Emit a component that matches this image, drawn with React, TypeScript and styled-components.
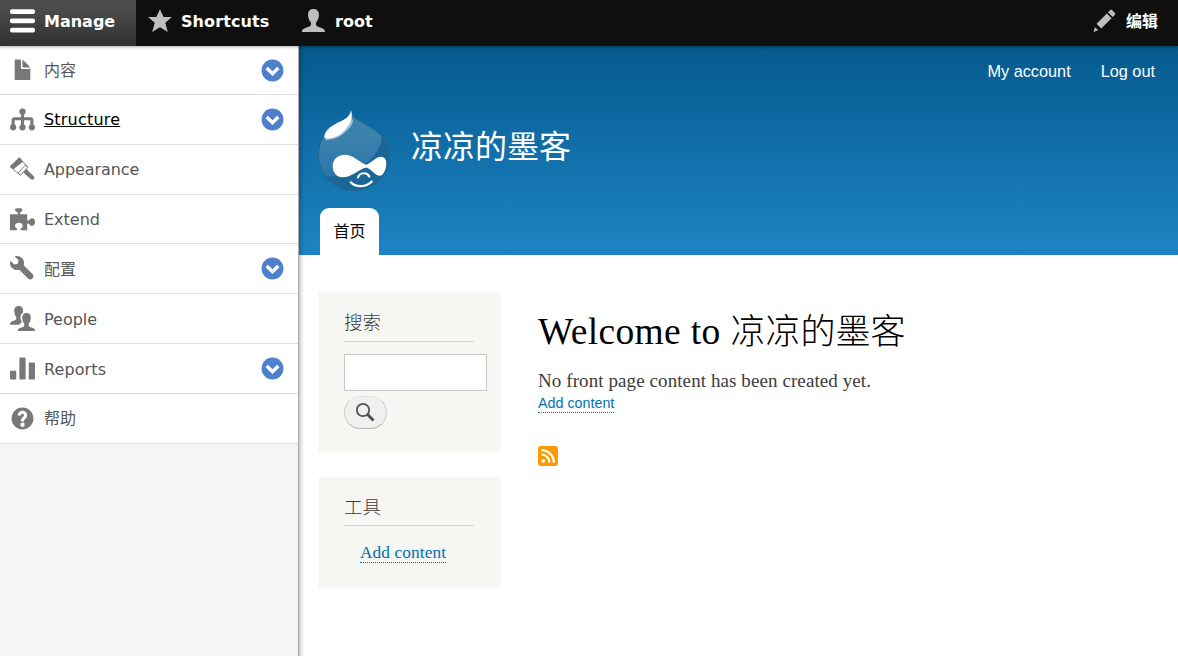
import React from "react";
import styled, { createGlobalStyle, css } from "styled-components";

const Global = createGlobalStyle`
  *, *::before, *::after { box-sizing: border-box; }
  html, body { margin: 0; height: 100%; background: #fff; overflow: hidden; }
  #root { height: 656px; }
  h1, h2, p, ul { margin: 0; padding: 0; font-weight: 400; }
  a { text-decoration: none; color: inherit; }
`;

const uiFont = `"DejaVu Sans", "Noto Sans CJK SC", sans-serif`;
const sansFont = `"Liberation Sans", "Noto Sans CJK SC", sans-serif`;
const serifFont = `"Liberation Serif", "Noto Sans CJK SC", serif`;

const Page = styled.div`
  display: flex;
  flex-direction: column;
  height: 656px;
`;

const Toolbar = styled.nav`
  display: flex;
  flex: none;
  position: relative;
  z-index: 3;
  height: 46px;
  background: #0f0f0f;
  color: #fff;
  font: 700 16px/43px ${uiFont};
  box-shadow: 0 0 3px 1px rgba(0, 0, 0, 0.33);
`;

const ToolbarTab = styled.a<{ $width?: number; $active?: boolean; $spacing?: number }>`
  display: flex;
  width: ${(p) => (p.$width ? `${p.$width}px` : "auto")};
  padding-left: ${(p) => (p.$spacing ? 11 : 10)}px;
  gap: 9px;
  letter-spacing: ${(p) => p.$spacing ?? 0}px;
  white-space: nowrap;
  ${(p) =>
    p.$active &&
    css`
      background: linear-gradient(rgba(255, 255, 255, 0.25) 20%, rgba(255, 255, 255, 0) 200%);
    `}
  svg { margin-top: 8px; }
  &:last-child { margin-left: auto; padding-right: 20px; }
`;

const Icon = styled.svg`
  flex: none;
  width: 25px;
  height: 25px;
  fill: currentColor;
`;

const TabIcon = styled(Icon)<{ $bright?: boolean }>`
  color: ${(p) => (p.$bright ? "#fff" : "#bebebe")};
`;

const Body = styled.div`
  display: flex;
  flex: 1;
  min-height: 0;
`;

const Tray = styled.aside`
  position: relative;
  z-index: 2;
  flex: none;
  width: 299px;
  background: #f5f5f5;
  border-right: 1px solid #aaa;
  box-shadow: -1px 0 5px 2px rgba(0, 0, 0, 0.33);
`;

const MenuRow = styled.a`
  display: flex;
  align-items: center;
  height: 49.83px;
  padding: 0 13px 0 10px;
  background: #fff;
  border-bottom: 1px solid #ddd;
  color: #787878;
  font: 400 16px/24px ${uiFont};
  &:first-child { height: 49px; }
`;

const MenuLabel = styled.span<{ $active?: boolean; $spacing?: number }>`
  flex: 1;
  padding-top: 2px;
  margin-left: 9px;
  color: ${(p) => (p.$active ? "#000" : "#565656")};
  text-decoration: ${(p) => (p.$active ? "underline" : "none")};
  letter-spacing: ${(p) => p.$spacing ?? 0}px;
`;

const Toggle = styled(Icon)`
  color: #4f80cc;
`;

const Site = styled.div`
  flex: 1;
  min-width: 0;
`;

const Banner = styled.header`
  display: flex;
  flex-direction: column;
  height: 209px;
  background: linear-gradient(#055a8e, #1d84c3);
  color: #fff;
  padding: 0 23px 0 19px;
`;

const UserLinks = styled.div`
  display: flex;
  justify-content: flex-end;
  gap: 30px;
  padding-top: 14px;
  height: 63px;
  font: 16.3px/23px ${sansFont};
`;

const Branding = styled.div`
  display: flex;
  gap: 20px;
  height: 99px;
`;

const Logo = styled.svg`
  width: 73px;
  height: 82px;
`;

const SiteName = styled.span`
  padding-top: 14px;
  font: 32px/48px ${sansFont};
`;

const HomeTab = styled.a`
  align-self: flex-start;
  width: 59px;
  height: 47px;
  margin-left: 2px;
  border-radius: 9px 9px 0 0;
  background: #fff;
  color: #000;
  text-align: center;
  font: 16px/48px ${sansFont};
`;

const Main = styled.main`
  display: flex;
  gap: 37px;
  padding: 37px 0 0 19px;
`;

const Sidebar = styled.div`
  display: flex;
  flex-direction: column;
  gap: 25px;
  width: 183px;
`;

const Block = styled.section<{ $height: number }>`
  height: ${(p) => p.$height}px;
  padding: 15px 13px 0 25px;
  background: #f6f6f2;
  border: 1px solid #f9f9f9;
`;

const BlockTitle = styled.h2<{ $height?: number }>`
  width: 130px;
  height: ${(p) => p.$height ?? 34}px;
  border-bottom: 1px solid #d3d5d1;
  color: #3b3b3b;
  font: 300 18.5px/31px ${serifFont};
`;

const SearchInput = styled.input`
  display: block;
  width: 143px;
  height: 37px;
  margin-top: 12px;
  border: 1px solid #c7c7c7;
  background: #fff;
`;

const SearchButton = styled.button`
  display: flex;
  align-items: center;
  justify-content: center;
  width: 43px;
  height: 33px;
  margin-top: 5px;
  padding: 0 2px 2px 0;
  border: 1px solid #ccc;
  border-top-color: #e4e4e4;
  border-bottom-color: #b4b4b4;
  border-radius: 17px;
  background: #f0f0f0;
`;

const Link = styled.a<{ $serif?: boolean }>`
  display: inline-block;
  color: #0071b3;
  border-bottom: 1px dotted #0071b3;
  font: ${(p) => (p.$serif ? `17.3px/18px ${serifFont}` : `14.3px/18px ${sansFont}`)};
  letter-spacing: ${(p) => (p.$serif ? 0.1 : 0)}px;
`;

const ToolList = styled.div`
  padding: 18px 0 0 16px;
`;

const Content = styled.article`
  display: flex;
  flex-direction: column;
  align-items: flex-start;
  padding-top: 16px;
`;

const Title = styled.h1`
  color: #000;
  font: 300 35px/48px ${serifFont};
  white-space: nowrap;
`;

const Latin = styled.span`
  font-weight: 400;
  font-size: 37.5px;
  letter-spacing: 0.35px;
`;

const Message = styled.p`
  margin-top: 10px;
  color: #3b3b3b;
  font: 19px/27px ${serifFont};
  letter-spacing: 0.09px;
`;

const Feed = styled.svg`
  width: 20px;
  height: 20px;
  margin-top: 33px;
`;

const glyphs: Record<string, React.ReactNode> = {
  burger: (
    <>
      <rect y="0.8" width="16" height="3" rx="1.25" />
      <rect y="6.7" width="16" height="3" rx="1.25" />
      <rect y="12.6" width="16" height="3" rx="1.25" />
    </>
  ),
  star: <path d="M8.300.8l2.300 5h5.300l-4.200 3.700 1.600 5.900-5-3.100-5 3.100L5 9.500.7 5.800H6z" />,
  person: (
    <path d="M8 .7c2.100 0 3.500 1.300 3.500 3.500 0 1.900-.7 4-1.900 5.100v1.400c.1 1 1.700 1.400 3.200 1.900 1.600.5 2.500 1.300 2.500 2.300v.5H.6v-.5c0-1 .9-1.800 2.500-2.300 1.500-.5 3.200-.9 3.300-1.900V9.300C5.200 8.200 4.500 6.100 4.500 4.200 4.500 2 5.900.7 8 .7z" />
  ),
  pencil: (
    <path d="M14.545 3.042l-1.586-1.585c-.389-.389-1.025-.389-1.414 0l-1.293 1.293 3 3 1.293-1.293c.389-.389.389-1.026 0-1.415zM5.900 13.100l-3-3 6.600-6.600 3 3zM1 15.400l.9-3.200 2 2z" />
  ),
  file: (
    <path d="M12.502 7h-5c-.276 0-.502-.225-.502-.5v-5c0-.275-.225-.5-.5-.5h-3c-.275 0-.5.225-.5.5v12.029c0 .275.225.5.5.5h9.002c.275 0 .5-.225.5-.5v-6.529c0-.275-.225-.5-.5-.5zM8.502 6h4c.275 0 .34-.159.146-.354l-4.293-4.292c-.195-.195-.353-.129-.353.146v4c0 .275.225.5.5.5z" />
  ),
  structure: (
    <>
      <path
        d="M8 3v10M2 13V8.500Q2 7.500 3 7.500H13Q14 7.500 14 8.500V13"
        fill="none"
        stroke="currentColor"
        strokeWidth="2"
      />
      <circle cx="8" cy="3" r="2" />
      <circle cx="2" cy="13" r="2" />
      <circle cx="8" cy="13" r="2" />
      <circle cx="14" cy="13" r="2" />
    </>
  ),
  brush: (
    <>
      <path d="M6 .4L11.200 6.400 6.600 11.600 0 6.200z" fill="#fff" stroke="currentColor" strokeWidth=".6" />
      <path d="M6 .3L0 6.100l2.200 1.700L8.300 3z" />
      <path d="M9.700 5.200l1.700 1.400-4.600 5-1.600-1.300z" fill="#fff" stroke="currentColor" strokeWidth=".6" />
      <path d="M10.500 7.600L15 12.100c.7.700.7 1.500.2 2-.6.600-1.400.5-2 0L8.500 9.900z" />
    </>
  ),
  puzzle: (
    <path d="M0 4.700h4.500c.7 0 .8-.5.400-1.100C4.500 3.100 3.200 2.800 3.200 1.800c0-.8.900-1 2.400-1S8 1 8 1.800c0 1-1.100 1.300-1.500 1.800-.4.6-.2 1.100.4 1.100H11v3.300c0 .8.700.8 1.200.4.500-.6 1-1.200 1.900-1.200 1.300 0 1.900 1 1.900 2.400s-.7 2.500-1.900 2.500c-.9 0-1.400-.8-1.900-1.300-.5-.5-1.200-.3-1.200.4v3.700H7.400c-.8 0-.9-.6-.4-1.100.5-.5 1.100-.9 1.100-1.800 0-1.200-1-1.900-2.400-1.900s-2.500.7-2.500 1.900c0 .9.700 1.300 1.100 1.800.5.500.4 1.100-.4 1.100H0z" />
  ),
  wrench: (
    <path d="M14.416 11.586l-.01-.008v-.001l-5.656-5.656c.15-.449.252-.921.252-1.421 0-2.485-2.016-4.500-4.502-4.500-.505 0-.981.102-1.434.255l2.431 2.431-.588 2.196-2.196.588-2.445-2.445c-.162.464-.268.956-.268 1.475 0 2.486 2.014 4.500 4.500 4.500.5 0 .972-.102 1.421-.251l5.667 5.665c.781.781 2.047.781 2.828 0s.781-2.047 0-2.828z" />
  ),
  people: (
    <>
      <path d="M5.500 0C7.300 0 8.400 1.200 8.400 2.900c0 .5-.1 1-.3 1.500C7.100 5 6.700 6 6.700 7.300c0 1 .3 2 .9 2.900L5.800 12H0v-.5c0-1 1-1.600 2.200-2 1.100-.3 1.800-.6 1.800-1.200V7.100C3.200 6.100 2.700 4.600 2.700 3 2.700 1.200 3.800 0 5.500 0z" />
      <path d="M10.600 4.400c1.800 0 2.700 1.200 2.700 2.900 0 1.500-.5 3-1.300 3.900v1.200c.1.700.7 1 1.900 1.400 1.400.4 2.100 1 2.100 1.800v.4H5v-.4c0-.8.8-1.400 2.200-1.800 1.100-.4 1.800-.7 1.900-1.400v-1.200c-.8-.9-1.300-2.400-1.300-3.900 0-1.700 1-2.900 2.800-2.900z" />
    </>
  ),
  chart: (
    <>
      <rect y="9.500" width="4" height="5.500" rx=".6" />
      <rect x="6" y="1" width="4" height="14" rx=".6" />
      <rect x="12" y="4.200" width="4" height="10.800" rx=".6" />
    </>
  ),
  help: (
    <path d="M8.002 1c-3.868 0-7.002 3.134-7.002 7s3.134 7 7.002 7c3.865 0 7-3.134 7-7s-3.135-7-7-7zm3 5c0 .551-.16 1.085-.477 1.586l-.158.22c-.07.093-.189.241-.361.393-.168.148-.35.299-.545.447l-.203.189-.141.129-.096.17-.021.235v.63h-2.001v-.704c.026-.396.078-.73.204-.999.125-.269.271-.498.439-.688l.225-.21-.01-.015.176-.14.137-.128c.186-.139.357-.277.516-.417l.148-.18c.098-.152.168-.323.168-.518 0-.552-.447-1-1-1s-1.002.448-1.002 1h-2c0-1.657 1.343-3 3.002-3 1.656 0 3 1.343 3 3zm-1.750 6.619c0 .344-.281.625-.625.625h-1.250c-.345 0-.626-.281-.626-.625v-1.238c0-.344.281-.625.626-.625h1.250c.344 0 .625.281.625.625v1.238z" />
  ),
};

const menu = [
  { label: "内容", icon: "file", toggle: true },
  { label: "Structure", icon: "structure", toggle: true, active: true, spacing: 0.2 },
  { label: "Appearance", icon: "brush", spacing: -0.08 },
  { label: "Extend", icon: "puzzle" },
  { label: "配置", icon: "wrench", toggle: true },
  { label: "People", icon: "people" },
  { label: "Reports", icon: "chart", toggle: true, spacing: 0.1 },
  { label: "帮助", icon: "help" },
];

const dropOutline =
  "M33 1c1 7 5 9 12 13C58 21 71.500 30 71.500 47c0 20-16 34.500-35.500 34.500S.5 66 .5 46.500C.5 31 9 22 19 15.500c8-5 13-8.500 14-14.500z";

function Druplicon() {
  return (
    <Logo viewBox="0 0 73 82">
      <defs>
        <clipPath id="drop">
          <path d={dropOutline} />
        </clipPath>
        <linearGradient id="sheen" x1="0" y1="0" x2="0" y2="1">
          <stop offset="0.45" stopColor="#3d82af" />
          <stop offset="1" stopColor="#2b75a8" />
        </linearGradient>
      </defs>
      <g clipPath="url(#drop)">
        <rect width="73" height="82" fill="#1c6698" />
        <path d="M0 0h34c1 7 5 9 12 13 7 4 13 7 17 11C66 36 56 50 42 58c-10 7-26 11-42 9z" fill="url(#sheen)" />
      </g>
      <path d={dropOutline} fill="none" stroke="#2a6288" strokeWidth=".8" />
      <path d="M7 31c6 0 14-2 19-7 6-5 9-9 9-13l-4-3z" fill="#a3c3da" />
      <path d="M6.300 28.500C6 22 13 17 20 13.500 27 10.500 32 8 33 1c1.500 6 1 10-2 14.500-3 4-5 7-9 10-6 4-15 5-15.700 3z" fill="#fff" />
      <path d="M26.500 45.700c9 0 14 7 21.500 10 5.500-1.500 9.500-8 15-8 3.500 0 5.500 3 5.300 7-.3 6-3 12-6.300 12-5 0-8-6-13.500-8.200-8 1.500-14 9.800-24 9.800-6 0-9.800-5-9.800-11.300 0-6.300 5-11.300 11.800-11.300z" fill="#fff" />
      <path d="M40 68.500c1.500-5.500 9.500-5.500 11.300-1M32.700 73.300c5 5.500 16 5 21-.8" fill="none" stroke="#fff" strokeWidth="2.200" strokeLinecap="round" />
    </Logo>
  );
}

export default function App() {
  return (
    <Page>
      <Global />
      <Toolbar>
        <ToolbarTab $width={136} $active>
          <TabIcon $bright viewBox="0 0 16 16">{glyphs.burger}</TabIcon>
          Manage
        </ToolbarTab>
        <ToolbarTab $width={155} $spacing={0.1}>
          <TabIcon viewBox="0 0 16 16">{glyphs.star}</TabIcon>
          Shortcuts
        </ToolbarTab>
        <ToolbarTab>
          <TabIcon viewBox="0 0 16 16">{glyphs.person}</TabIcon>
          root
        </ToolbarTab>
        <ToolbarTab>
          <TabIcon viewBox="0 0 16 16">{glyphs.pencil}</TabIcon>
          编辑
        </ToolbarTab>
      </Toolbar>
      <Body>
        <Tray>
          {menu.map((m) => (
            <MenuRow key={m.label}>
              <Icon viewBox="0 0 16 16">{glyphs[m.icon]}</Icon>
              <MenuLabel $active={m.active} $spacing={m.spacing}>{m.label}</MenuLabel>
              {m.toggle && (
                <Toggle viewBox="0 0 16 16">
                  <circle cx="8" cy="8" r="7" />
                  <path d="M4.300 6.400L8 10l3.700-3.600" fill="none" stroke="#fff" strokeWidth="2.200" />
                </Toggle>
              )}
            </MenuRow>
          ))}
        </Tray>
        <Site>
          <Banner>
            <UserLinks>
              <a>My account</a>
              <a>Log out</a>
            </UserLinks>
            <Branding>
              <Druplicon />
              <SiteName>凉凉的墨客</SiteName>
            </Branding>
            <HomeTab>首页</HomeTab>
          </Banner>
          <Main>
            <Sidebar>
              <Block $height={160}>
                <BlockTitle>搜索</BlockTitle>
                <SearchInput />
                <SearchButton>
                  <svg width="20" height="20" viewBox="0 0 20 20" fill="none" stroke="#505050">
                    <circle cx="8" cy="8" r="6.200" strokeWidth="1.800" />
                    <path d="M12.300 12.300L18.500 18.500" strokeWidth="3" />
                  </svg>
                </SearchButton>
              </Block>
              <Block $height={111}>
                <BlockTitle $height={33}>工具</BlockTitle>
                <ToolList>
                  <Link $serif>Add content</Link>
                </ToolList>
              </Block>
            </Sidebar>
            <Content>
              <Title>
                <Latin>Welcome to </Latin>凉凉的墨客
              </Title>
              <Message>No front page content has been created yet.</Message>
              <Link>Add content</Link>
              <Feed viewBox="0 0 20 20">
                <rect width="20" height="20" rx="3" fill="#ff9900" />
                <circle cx="5.300" cy="14.800" r="1.900" fill="#fff" />
                <path d="M3.500 8.500a8 8 0 0 1 8 8.200M3.500 4.200a12.500 12.500 0 0 1 12.400 12.500" fill="none" stroke="#fff" strokeWidth="2.200" />
              </Feed>
            </Content>
          </Main>
        </Site>
      </Body>
    </Page>
  );
}
